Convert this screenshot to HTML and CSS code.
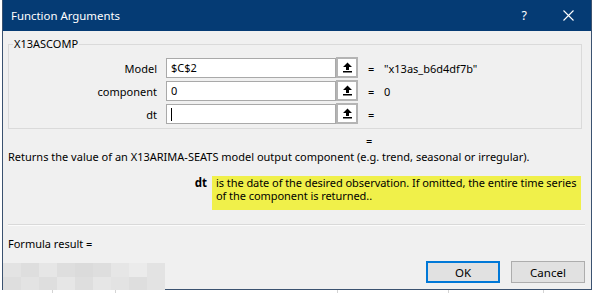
FILE: index.html
```html
<!DOCTYPE html>
<html>
<head>
<meta charset="utf-8">
<link rel="stylesheet" href="styles.css">
</head>
<body>
<div class="dialog">
  <div class="titlebar">
    <span class="title">Function Arguments</span>
    <span class="help">?</span>
    <svg class="close" width="11" height="11" viewBox="0 0 11 11"><path d="M0.5 0.5 L10.5 10.5 M10.5 0.5 L0.5 10.5" stroke="#fff" stroke-width="1.1" fill="none"/></svg>
  </div>
  <div class="body">
    <fieldset class="group">
      <legend class="legend">X13ASCOMP</legend>
      <div class="row">
        <span class="label">Model</span>
        <span class="input">$C$2</span>
        <span class="pick"><svg width="11" height="11" viewBox="0 0 11 11"><path d="M5.5 0.5 L10 5 L7 5 L7 8 L4 8 L4 5 L1 5 Z" fill="#000"/><rect x="1" y="9" width="9" height="1.5" fill="#000"/></svg></span>
        <span class="eq">=</span>
        <span class="val">"x13as_b6d4df7b"</span>
      </div>
      <div class="row">
        <span class="label">component</span>
        <span class="input">0</span>
        <span class="pick"><svg width="11" height="11" viewBox="0 0 11 11"><path d="M5.5 0.5 L10 5 L7 5 L7 8 L4 8 L4 5 L1 5 Z" fill="#000"/><rect x="1" y="9" width="9" height="1.5" fill="#000"/></svg></span>
        <span class="eq">=</span>
        <span class="val">0</span>
      </div>
      <div class="row">
        <span class="label">dt</span>
        <span class="input"><span class="caret"></span></span>
        <span class="pick"><svg width="11" height="11" viewBox="0 0 11 11"><path d="M5.5 0.5 L10 5 L7 5 L7 8 L4 8 L4 5 L1 5 Z" fill="#000"/><rect x="1" y="9" width="9" height="1.5" fill="#000"/></svg></span>
        <span class="eq">=</span>
        <span class="val"></span>
      </div>
    </fieldset>
    <div class="result-eq">=</div>
    <div class="desc">Returns the value of an X13ARIMA-SEATS model output component (e.g. trend, seasonal or irregular).</div>
    <div class="argrow">
      <span class="argname">dt</span>
      <div class="arghelp">is the date of the desired observation. If omitted, the entire time series of the component is returned..</div>
    </div>
    <div class="sep"></div>
    <div class="formula">Formula result =</div>
    <div class="footer">
      <div class="blur">
        <i class="b1"></i><i class="b2"></i><i class="b3"></i><i class="b2"></i><i class="b4"></i><i class="b2"></i><i class="b3"></i><i class="b5"></i><i class="b1"></i>
        <i class="b2"></i><i class="b1"></i><i class="b2"></i><i class="b3"></i><i class="b2"></i><i class="b3"></i><i class="b1"></i><i class="b2"></i><i class="b1"></i>
      </div>
      <div class="buttons">
        <button class="btn ok">OK</button>
        <button class="btn">Cancel</button>
      </div>
    </div>
  </div>
</div>
<div class="sheet">
  <span class="c1"></span><span class="c2"></span><span class="c3"></span><span class="c4"></span><span class="c5"></span>
</div>
</body>
</html>
```
FILE: styles.css
```css
html, body {
  margin: 0;
  padding: 0;
  background: #ffffff;
  width: 592px;
  height: 293px;
  overflow: hidden;
  font-family: "Noto Sans", "DejaVu Sans", sans-serif;
  font-size: 11px;
  color: #000;
}

.dialog {
  margin-left: 2px;
  width: 588px;
  height: 289px;
  border-left: 1px solid #3b5270;
  border-right: 1px solid #3b5270;
  border-bottom: 1px solid #3b5270;
  background: #f0f0f0;
  display: flex;
  flex-direction: column;
}

.titlebar {
  height: 31px;
  background: #053b74;
  color: #fff;
  display: flex;
  align-items: center;
  padding-left: 8px;
  flex: none;
}

.title {
  font-size: 11.4px;
  flex: 1;
}

.help {
  font-size: 12.5px;
  margin-right: 36px;
}

.close {
  margin-right: 17px;
}

.body {
  flex: 1;
  display: flex;
  flex-direction: column;
  padding: 0 0 0 5px;
}

.group {
  margin: 5px 0 0 0;
  width: 574px;
  padding: 6px 0 1px 0;
  border: 1px solid #dadada;
  box-sizing: border-box;
  min-width: 0;
}

.legend {
  margin-left: 4px;
  padding: 0 1px;
  line-height: 16px;
}

.row {
  display: flex;
  align-items: center;
  height: 20px;
  margin-bottom: 3px;
}

.label {
  width: 148px;
  text-align: right;
  margin-right: 9px;
}

.input {
  width: 170px;
  height: 20px;
  box-sizing: border-box;
  border: 1px solid #a9a9a9;
  background: #fff;
  padding-left: 4px;
  line-height: 18px;
  display: flex;
  align-items: center;
}

.caret {
  width: 1px;
  height: 13px;
  background: #000;
}

.pick {
  width: 22px;
  height: 21px;
  box-sizing: border-box;
  border: 2px solid #b4b4b4;
  background: #fff;
  display: flex;
  align-items: center;
  justify-content: center;
  margin-top: -1px;
}

.eq {
  margin-left: 10px;
  width: 16px;
}

.val {
  white-space: pre;
}

.result-eq {
  margin-top: 4px;
  line-height: 16px;
  padding-left: 358px;
}

.desc {
  line-height: 16px;
}

.argrow {
  margin-top: 11px;
  display: flex;
}

.argname {
  width: 199px;
  text-align: right;
  font-weight: bold;
  padding-right: 5px;
  line-height: 13px;
  font-size: 11.5px;
}

.arghelp {
  width: 369px;
  height: 34px;
  box-sizing: border-box;
  background: #f0f04a;
  padding: 0 0 0 4px;
  line-height: 13px;
  letter-spacing: -0.06px;
}

.sep {
  margin-top: 14px;
  width: 577px;
  height: 1px;
  background: #d9d9d9;
  border-bottom: 1px solid #fbfbfb;
}

.formula {
  margin-top: 10px;
  line-height: 16px;
}

.footer {
  flex: 1;
  display: flex;
  justify-content: space-between;
  margin-left: -5px;
}

.blur {
  align-self: flex-end;
  display: grid;
  grid-template-columns: repeat(9, 18px);
  grid-template-rows: 14px 13px;
  margin-bottom: -1px;
}

.blur i { display: block; }
.b1 { background: #e3e3e3; }
.b2 { background: #dedede; }
.b3 { background: #e6e6e6; }
.b4 { background: #dbdbdb; }
.b5 { background: #ebebeb; }

.buttons {
  display: flex;
  gap: 11px;
  padding-top: 9px;
  margin-right: 6px;
}

.btn {
  width: 74px;
  height: 22px;
  box-sizing: border-box;
  border: 1px solid #adadad;
  background: #e1e1e1;
  font-family: "Noto Sans", "DejaVu Sans", sans-serif;
  font-size: 11.5px;
  color: #000;
  padding: 0;
}

.ok {
  border: 2px solid #0078d7;
}

.sheet {
  height: 3px;
  position: relative;
}

.sheet span {
  position: absolute;
  top: 0;
  width: 1px;
  height: 3px;
  background: #d4d4d4;
}
.c1 { left: 52px; }
.c2 { left: 115px; }
.c3 { left: 337px; }
.c4 { left: 448px; }
.c5 { left: 543px; }
```
